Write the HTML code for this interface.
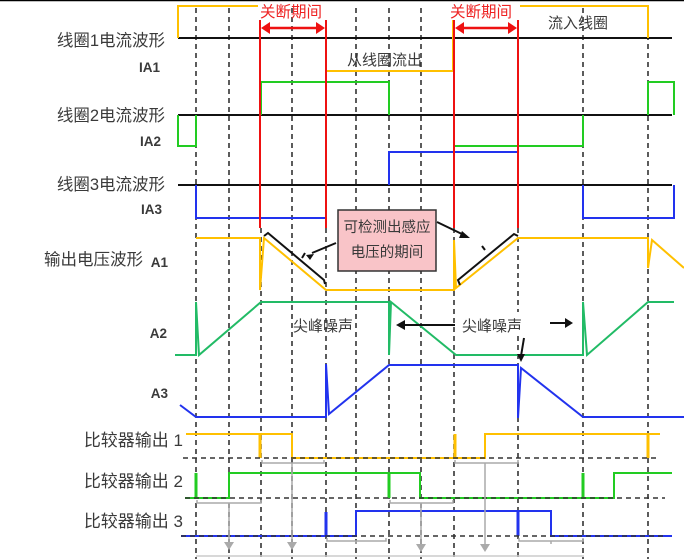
<!DOCTYPE html>
<html><head><meta charset="utf-8"><style>
html,body{margin:0;padding:0;background:#fff;}
svg{display:block;}
text{font-family:"Liberation Sans","Noto Sans CJK SC",sans-serif;fill:#3a3a3a;}
</style></head><body>
<svg width="684" height="559" viewBox="0 0 684 559" xmlns="http://www.w3.org/2000/svg">
<rect width="684" height="559" fill="#fff"/>
<line x1="0" y1="0.5" x2="684" y2="0.5" stroke="#000" stroke-width="1.5"/>
<g stroke="#333" stroke-width="1.6" stroke-dasharray="5,4">
<line x1="196" y1="8" x2="196" y2="559"/>
<line x1="229" y1="8" x2="229" y2="559"/>
<line x1="261" y1="228" x2="261" y2="559"/>
<line x1="292" y1="8" x2="292" y2="559"/>
<line x1="326" y1="228" x2="326" y2="559"/>
<line x1="356" y1="8" x2="356" y2="559"/>
<line x1="389" y1="8" x2="389" y2="559"/>
<line x1="421" y1="8" x2="421" y2="559"/>
<line x1="454" y1="228" x2="454" y2="559"/>
<line x1="518" y1="228" x2="518" y2="559"/>
<line x1="583" y1="8" x2="583" y2="559"/>
<line x1="648" y1="8" x2="648" y2="559"/>
</g>
<g stroke="#111" stroke-width="2">
<line x1="178" y1="38" x2="672" y2="38"/>
<line x1="178" y1="115" x2="672" y2="115"/>
<line x1="178" y1="185" x2="672" y2="185"/>
</g>
<g fill="none" stroke-width="2" stroke-linejoin="miter">
<path d="M178,38 V6 H258" stroke="#ffc000"/>
<path d="M326,38 V71 H453 V6 H648 V38" stroke="#ffc000"/>
<path d="M178,115 V146 H196 V115" stroke="#22cc22"/>
<path d="M261,115 V82 H389 V115" stroke="#22cc22"/>
<path d="M454,115 V146 H583 V115" stroke="#22cc22"/>
<path d="M648,115 V82 H674 V115" stroke="#22cc22"/>
<path d="M196,185 V218 H326 V185" stroke="#2233ee"/>
<path d="M389,185 V152 H518 V185" stroke="#2233ee"/>
<path d="M583,185 V218 H674 V185" stroke="#2233ee"/>
<path d="M196,238 H260 V290 L264,238 L326,290 H454 V240 L456,288 L518,238 H648 V268 L652,240 L684,268" stroke="#ffc000"/>
<path d="M175,355 H196 V302 L199,355 L261,302 H389 V355 L391,302 L456,355 H583 V302 L587,355 L648,302 H674" stroke="#22bb66"/>
<path d="M180,405 L196,417 H326 V364 L329,414 L389,365 H518 V418 L521,368 L583,417 H684" stroke="#2233ee"/>
<path d="M186,434 H292 V458 H485 V434 H660" stroke="#ffc000"/>
<path d="M260,434 V458 M455,458 V434 M648,434 V458" stroke="#ffc000" stroke-width="3"/>
<path d="M185,498 H229 V473 H420 V498 H614 V473 H672" stroke="#22cc22"/>
<path d="M196,498 V473 M389,473 V498 M583,498 V473" stroke="#22cc22" stroke-width="3"/>
<path d="M181,536 H356 V511 H551 V536 H672" stroke="#2233ee"/>
<path d="M326,536 V512 M518,511 V536" stroke="#2233ee" stroke-width="3"/>
</g>
<g stroke="#333" stroke-width="1.6" stroke-dasharray="5,4">
<line x1="183" y1="458" x2="660" y2="458"/>
<line x1="185" y1="498" x2="665" y2="498"/>
<line x1="181" y1="536" x2="665" y2="536"/>
</g>
<g fill="none" stroke="#aaa" stroke-width="1.5">
<path d="M262,460 v3 h30 v3 M292,466 v-3 h32 v-3"/>
<path d="M455,460 v3 h30 v3 M485,466 v-3 h33 v-3"/>
<path d="M197,500 v3 h32 v3 M229,506 v-3 h32 v-3"/>
<path d="M390,500 v3 h31 v3 M421,506 v-3 h32 v-3"/>
<path d="M327,538 v3 h29 v3 M356,544 v-3 h30 v-3"/>
<path d="M519,538 v3 h32 v3 M551,544 v-3 h32 v-3"/>
<path d="M229,506 V545 M292,466 V545 M421,506 V545 M485,466 V545"/>
<path d="M196,556 h388" stroke="#ccc"/>
</g>
<g fill="#aaa">
<path d="M224,542 h10 l-5,8z M287,542 h10 l-5,8z M416,544 h10 l-5,8z M480,544 h10 l-5,8z"/>
</g>
<g stroke="#ee1111" stroke-width="2">
<line x1="260" y1="20" x2="260" y2="228"/>
<line x1="326" y1="20" x2="326" y2="228"/>
<line x1="454" y1="20" x2="454" y2="228"/>
<line x1="518" y1="20" x2="518" y2="228"/>
<line x1="268" y1="28" x2="318" y2="28" stroke-width="2.5"/>
<line x1="462" y1="28" x2="510" y2="28" stroke-width="2.5"/>
</g>
<g fill="#ee1111">
<path d="M261,28 l9,-6 v12z M325,28 l-9,-6 v12z M455,28 l9,-6 v12z M517,28 l-9,-6 v12z"/>
</g>
<rect x="452" y="3" width="68" height="17" fill="#fff"/>
<text x="260" y="17" font-size="15.5" style="fill:#ee2222">关断期间</text>
<text x="450" y="17" font-size="15.5" style="fill:#ee2222">关断期间</text>
<text x="347" y="65" font-size="15">从线圈流出</text>
<text x="548" y="28" font-size="15">流入线圈</text>
<g fill="none" stroke="#111" stroke-width="2">
<path d="M264,236 L268,233 L324,280 L325,284"/>
<path d="M302,258 L305,253"/>
<path d="M336,243 L312,253"/>
<path d="M460,285 L458,280 L514,234 L518,236"/>
<path d="M485,250 L482,246"/>
<path d="M437,222 L464,235"/>
</g>
<path d="M306,255 l8,-1 l-4,6z M470,238 l-8,-7 l-3,7z" fill="#111"/>
<rect x="338" y="210" width="98" height="61" fill="#f9c4c8" stroke="#333" stroke-width="1.5"/>
<text x="387" y="232" font-size="14.5" text-anchor="middle">可检测出感应</text>
<text x="387" y="257" font-size="14.5" text-anchor="middle">电压的期间</text>
<text x="293" y="331" font-size="15">尖峰噪声</text>
<rect x="458" y="312" width="80" height="24" fill="#fff"/>
<text x="462" y="331" font-size="15">尖峰噪声</text>
<g stroke="#111" stroke-width="2" fill="none">
<line x1="455" y1="325" x2="403" y2="325"/>
<line x1="550" y1="323" x2="566" y2="323"/>
<line x1="524" y1="338" x2="521" y2="356"/>
</g>
<path d="M396,325 l9,-5 v10z M573,323 l-8,-5 v10z M521,362 l-4,-8 h8z" fill="#111"/>
<g font-size="16.5" text-anchor="end">
<text x="165" y="46">线圈1电流波形</text>
<text x="165" y="121">线圈2电流波形</text>
<text x="165" y="190">线圈3电流波形</text>
<text x="143" y="265">输出电压波形</text>
</g>
<g font-size="17" text-anchor="end">
<text x="183" y="446">比较器输出 1</text>
<text x="183" y="487">比较器输出 2</text>
<text x="183" y="527">比较器输出 3</text>
</g>
<g font-size="13.5" text-anchor="end" font-weight="bold" style="fill:#555">
<text x="160" y="72">IA1</text>
<text x="161" y="146">IA2</text>
<text x="162" y="214">IA3</text>
<text x="168" y="267">A1</text>
<text x="167" y="338">A2</text>
<text x="168" y="398">A3</text>
</g>
</svg>
</body></html>
